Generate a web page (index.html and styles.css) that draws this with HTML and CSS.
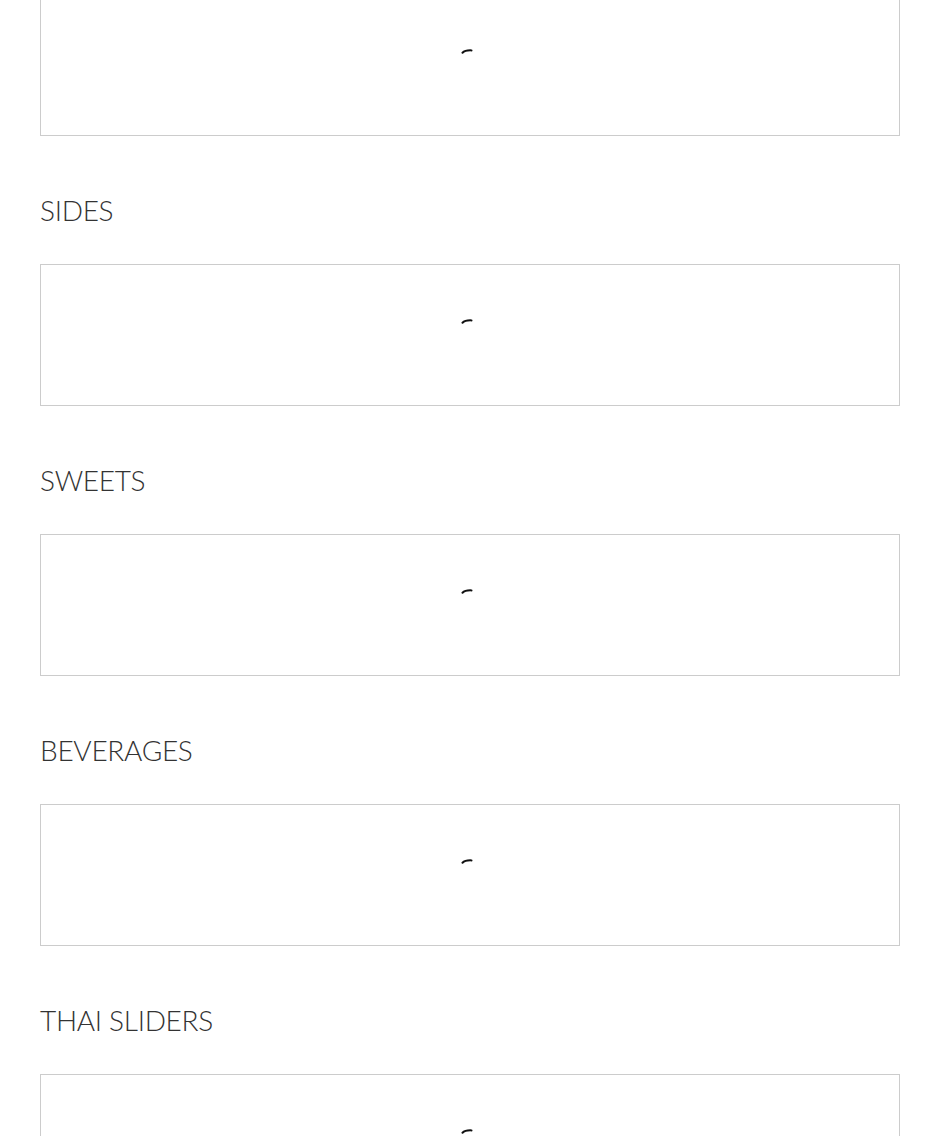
FILE: index.html
```html
<!DOCTYPE html>
<html>
<head>
<link rel="stylesheet" href="styles.css">
</head>
<body>

<div class="menuPage">

	<div class="menuSection firstSection">
		<div class="itemsBox">
			<svg class="loader" width="12" height="6" viewBox="0 0 12 6"><path d="M1.5 4.8 C3 3.2 6 2.2 10.5 2.4" fill="none" stroke="#111" stroke-width="2" stroke-linecap="round"/></svg>
		</div>
	</div>

	<div class="menuSection">
		<h2 class="sectionTitle">SIDES</h2>
		<div class="itemsBox">
			<svg class="loader" width="12" height="6" viewBox="0 0 12 6"><path d="M1.5 4.8 C3 3.2 6 2.2 10.5 2.4" fill="none" stroke="#111" stroke-width="2" stroke-linecap="round"/></svg>
		</div>
	</div>

	<div class="menuSection">
		<h2 class="sectionTitle">SWEETS</h2>
		<div class="itemsBox">
			<svg class="loader" width="12" height="6" viewBox="0 0 12 6"><path d="M1.5 4.8 C3 3.2 6 2.2 10.5 2.4" fill="none" stroke="#111" stroke-width="2" stroke-linecap="round"/></svg>
		</div>
	</div>

	<div class="menuSection">
		<h2 class="sectionTitle">BEVERAGES</h2>
		<div class="itemsBox">
			<svg class="loader" width="12" height="6" viewBox="0 0 12 6"><path d="M1.5 4.8 C3 3.2 6 2.2 10.5 2.4" fill="none" stroke="#111" stroke-width="2" stroke-linecap="round"/></svg>
		</div>
	</div>

	<div class="menuSection">
		<h2 class="sectionTitle">THAI SLIDERS</h2>
		<div class="itemsBox">
			<svg class="loader" width="12" height="6" viewBox="0 0 12 6"><path d="M1.5 4.8 C3 3.2 6 2.2 10.5 2.4" fill="none" stroke="#111" stroke-width="2" stroke-linecap="round"/></svg>
		</div>
	</div>

</div>

</body>
</html>
```

FILE: styles.css
```css
body {
	margin: 0;
	background: #ffffff;
	font-family: Lato, "Open Sans", sans-serif;
}

.menuPage {
	width: 860px;
	margin-left: 40px;
	margin-top: -6px;
}

.sectionTitle {
	margin: 57px 0 37px 0;
	font-size: 28px;
	line-height: 34px;
	font-weight: 300;
	color: #333333;
	letter-spacing: -0.3px;
}

.itemsBox {
	height: 142px;
	border: 1px solid #cccccc;
	display: flex;
	flex-direction: column;
	align-items: center;
	padding-top: 53px;
	box-sizing: border-box;
}

.loader {
	display: block;
	margin-left: -6px;
}
```
